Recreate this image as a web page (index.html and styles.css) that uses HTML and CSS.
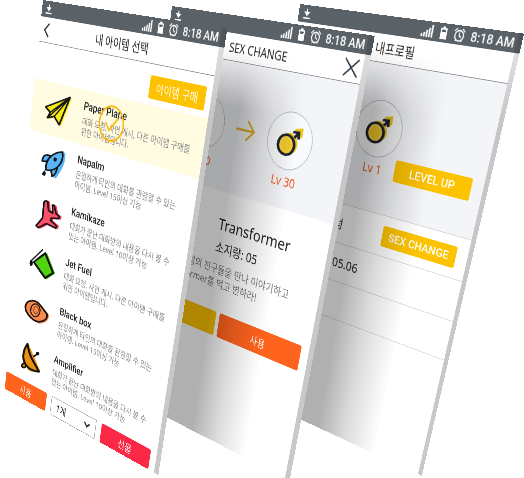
FILE: index.html
```html
<!DOCTYPE html>
<html lang="ko">
<head>
<meta charset="utf-8">
<title>아이템</title>
<link rel="stylesheet" href="styles.css">
</head>
<body>
<svg width="0" height="0" class="defs" aria-hidden="true">
  <symbol id="download" viewBox="0 0 16 16"><path d="M8 1v7M4.500 6L8 10l3.500-4z" fill="#fff" stroke="#fff" stroke-width="2"/><path d="M1 14h14" stroke="#fff" stroke-width="2"/></symbol>
  <symbol id="signal" viewBox="0 0 20 16"><path d="M2 16v-4M6 16v-6M10 16V7M14 16V4M18 16V0" stroke="#fff" stroke-width="2.600"/></symbol>
  <symbol id="battery" viewBox="0 0 10 16"><path d="M3 0h4v2h3v14H0V2h3z" fill="#fff"/><path d="M2 4h6v3H2z" fill="#5a6167"/></symbol>
  <symbol id="alarm" viewBox="0 0 18 18"><circle cx="9" cy="10" r="6.500" fill="none" stroke="#fff" stroke-width="1.800"/><path d="M9 6v4l3 2M1 5l4-4M17 5l-4-4M4 17l1.500-2M14 17l-1.500-2" fill="none" stroke="#fff" stroke-width="1.700"/></symbol>
  <symbol id="male" viewBox="0 0 80 80">
    <g transform="translate(40 40) matrix(.58 -.11 .1 .44 0 0)">
      <ellipse cx="-3" cy="8" rx="27" ry="34" fill="#efc419"/>
      <path d="M18-37L43-38 39-12 30-4 22-18z" fill="#efc419"/>
      <ellipse cx="-11" cy="11" rx="25" ry="31" fill="#f2c92c" stroke="#1c2130" stroke-width="8"/>
      <ellipse cx="-11" cy="11" rx="18" ry="24" fill="none" stroke="#f8dc60" stroke-width="2"/>
      <path d="M12-28l17 3-2 20M27-23L15-10" fill="none" stroke="#1c2130" stroke-width="8"/>
    </g>
  </symbol>
</svg>
<main class="scene">

  <section class="phone profile">
    <div class="status"><svg class="i-dl"><use href="#download"/></svg><svg class="i-sig"><use href="#signal"/></svg><svg class="i-bat"><use href="#battery"/></svg><svg class="i-alarm"><use href="#alarm"/></svg><span>8:18 AM</span></div>
    <header class="bar"><h2>내프로필</h2></header>
    <div class="hero">
      <div class="level"><div class="avatar"><svg><use href="#male"/></svg></div><p>Lv 1</p></div>
      <button class="gold raised">LEVEL UP</button>
    </div>
    <div class="row"><span>현재 성별</span><span>남성</span><button class="gold">SEX CHANGE</button></div>
    <div class="row"><span>가입일</span><span>1989.05.06</span></div>
    <div class="row"></div>
    <div class="shade"></div>
  </section>

  <section class="phone change">
    <div class="status"><svg class="i-dl"><use href="#download"/></svg><svg class="i-sig"><use href="#signal"/></svg><svg class="i-bat"><use href="#battery"/></svg><svg class="i-alarm"><use href="#alarm"/></svg><span>8:18 AM</span></div>
    <header class="bar"><h2>SEX CHANGE</h2>
      <button class="icon-btn close" aria-label="닫기"><svg viewBox="0 0 24 24"><path d="M1 1l22 22M23 1L1 23" fill="none" stroke="#273241" stroke-width="2"/></svg></button>
    </header>
    <div class="hero">
      <div class="level"><div class="avatar"></div><p>Lv 10</p></div>
      <svg class="arrow" viewBox="0 0 36 32"><path d="M0 16h34M20 2l14 14-14 14" fill="none" stroke="#e0ab1c" stroke-width="3"/></svg>
      <div class="level"><div class="avatar"><svg><use href="#male"/></svg></div><p>Lv 30</p></div>
    </div>
    <div class="about">
      <h3>Transformer</h3>
      <p class="count">소지량: 05</p>
      <p class="text">지금 이성의 친구들을 만나 이야기하고<br>Transformer를 먹고 변하라!</p>
    </div>
    <div class="pair"><button class="gold">구매</button><button class="orange">사용</button></div>
    <div class="shade"></div>
  </section>

  <section class="phone items">
    <div class="status"><svg class="i-dl"><use href="#download"/></svg><svg class="i-sig"><use href="#signal"/></svg><svg class="i-bat"><use href="#battery"/></svg><svg class="i-alarm"><use href="#alarm"/></svg><span>8:18 AM</span></div>
    <header class="bar">
      <button class="icon-btn back" aria-label="뒤로"><svg viewBox="0 0 14 24"><path d="M12 2L2 12l10 10" fill="none" stroke="#273241" stroke-width="2.500"/></svg></button>
      <h2>내 아이템 선택</h2>
    </header>
    <div class="buy"><button class="gold">아이템 구매</button></div>
    <ul class="list">
      <li class="selected">
        <svg viewBox="0 0 60 60"><g transform="translate(30 30) matrix(.76 -.13 .08 .5 0 0)" stroke-linejoin="round"><path d="M38-38L-36-10-22 6-32 22-10 18 6 44z" fill="#f7ea12"/><path d="M33-41L-40-14-26 3-35 19-14 15 1 40z" fill="#f7ea12" stroke="#151515" stroke-width="5"/><path d="M33-41L-26 3M33-41L-35 19M33-41L-14 15" fill="none" stroke="#151515" stroke-width="4"/></g></svg>
        <div><h3>Paper Plane</h3><p>대화 요청, 사연 게시, 다른 아이템 구매를<br>위한 아이템입니다.</p></div>
        <svg class="check" viewBox="0 0 54 54"><circle cx="27" cy="27" r="25" fill="none" stroke="#fbb919" stroke-width="3"/><path d="M15 27l9 10 16-20" fill="none" stroke="#fbb919" stroke-width="3"/></svg>
      </li>
      <li>
        <svg viewBox="0 0 60 60"><g transform="translate(30 30) matrix(.77 -.16 .08 .51 0 0)" stroke-linejoin="round"><path d="M34-30C36 6 16 28 8 42L0 38 2 20-14 20z" fill="#58b5f5" stroke="#58b5f5" stroke-width="4"/><path d="M-20-6l-13-2q2-18 14-18l12 3z" fill="#58b5f5" stroke="#10141c" stroke-width="5"/><path d="M-6 20l3 18q12-4 15-26z" fill="#58b5f5" stroke="#10141c" stroke-width="5"/><path d="M28-34C4-36-24-16-22 19 6 26 32 2 28-34z" fill="#58b5f5" stroke="#10141c" stroke-width="5"/><ellipse cx="6" cy="-12" rx="5" ry="6" fill="#10141c"/><path d="M-26 20l-9 12 9 6 5-8z" fill="#10141c"/></g></svg>
        <div><h3>Napalm</h3><p>은밀하게 타인의 대화를 관람할 수 있는<br>아이템. Level 15이상 가능</p></div>
      </li>
      <li>
        <svg viewBox="0 0 60 60"><g transform="translate(30 30) matrix(.77 -.16 .08 .51 0 0)" stroke-linejoin="round"><path d="M-11-36q6-9 12-1L3-12 16-4 15-29 20-28 26-3 36 5 34 11 12 11 9 18 28 34 25 41-3 29-28 43-35 37-15 12z" transform="translate(5 1)" fill="#fb3f5c" stroke="#fb3f5c" stroke-width="4"/><path d="M-11-36q6-9 12-1L3-12 16-4 15-29 20-28 26-3 36 5 34 11 12 11 9 18 28 34 25 41-3 29-28 43-35 37-15 12z" fill="#fb5068" stroke="#151216" stroke-width="5"/></g></svg>
        <div><h3>Kamikaze</h3><p>대화가 끝난 대화방의 내용을 다시 볼 수<br>있는 아이템. Level 10이상 가능</p></div>
      </li>
      <li>
        <svg viewBox="0 0 60 60"><g transform="translate(30 30) matrix(.79 -.2 .09 .53 0 0)"><path d="M-20-4L16-31 39 28 13 48z" fill="#4fd40e"/><path d="M-25-4L10-31 33 27 9 43z" fill="#4fd40e" stroke="#111" stroke-width="6" stroke-linejoin="round"/><path d="M-36-4L3-42" stroke="#111" stroke-width="4"/><path d="M-30-4L7-38" stroke="#fff" stroke-width="3"/><ellipse cx="-33" cy="0" rx="5" ry="9" fill="#111"/></g></svg>
        <div><h3>Jet Fuel</h3><p>대화 요청, 사연 게시, 다른 아이템 구매를<br>위한 아이템입니다.</p></div>
      </li>
      <li>
        <svg viewBox="0 0 60 60"><g transform="translate(30 30) matrix(.81 -.24 .09 .55 0 0)"><path d="M-22-22Q-2-36 16-16L36 10Q36 33 10 36-14 32-30 4-36-12-22-22z" fill="#f88a4c"/><path d="M-26-28Q-4-38 12-17L31 8Q32 28 6 31-16 28-32 0-38-18-26-28z" fill="#f88a4c" stroke="#15110e" stroke-width="5"/><ellipse cx="-4" cy="-3" rx="14" ry="19" fill="none" stroke="#15110e" stroke-width="3"/><ellipse cx="-2" cy="-4" rx="7" ry="11" fill="none" stroke="#6b3a20" stroke-width="2"/></g></svg>
        <div><h3>Black box</h3><p>은밀하게 타인의 대화를 관람할 수 있는<br>아이템. Level 15이상 가능</p></div>
      </li>
      <li>
        <svg viewBox="0 0 60 60"><g transform="translate(30 30) matrix(.82 -.29 .09 .56 0 0)" stroke-linejoin="round"><path d="M-8-40L26 40Q0 46-12 34z" fill="#e8920e"/><path d="M-12-42C-34-12-30 36 22 41 8 12-6 0-12-42z" fill="#e8920e" stroke="#17120c" stroke-width="6"/><path d="M5-3l13-9" stroke="#17120c" stroke-width="5"/><circle cx="18" cy="-13" r="5" fill="#17120c"/><circle cx="-23" cy="23" r="6" fill="#e8920e" stroke="#17120c" stroke-width="5"/></g></svg>
        <div><h3>Amplifier</h3><p>대화가 끝난 대화방의 내용을 다시 볼 수<br>있는 아이템. Level 10이상 가능</p></div>
      </li>
    </ul>
    <footer class="actions">
      <button class="orange">사용</button>
      <div class="pick"><select aria-label="개수"><option>1개</option></select><svg viewBox="0 0 16 12"><path d="M2 3l6 6 6-6" fill="none" stroke="#273241" stroke-width="3"/></svg></div>
      <button class="red">선물</button>
    </footer>
  </section>
</main>
</body>
</html>
```
FILE: styles.css
```css
* { box-sizing: border-box; }
body { margin: 0; background: #fff; font-family: "Noto Sans", "Noto Sans CJK KR", sans-serif; color: #222; }
h2, h3, p, ul { margin: 0; padding: 0; font-weight: 400; }
ul { list-style: none; }
button, select { font: inherit; margin: 0; padding: 0; border: 0; }
.defs { position: absolute; }

.scene { position: relative; height: 100vh; overflow: hidden; }

/* each phone is a flat 360-wide screen, tilted in space */
.phone {
  position: absolute; top: 0; left: 0;
  width: 360px; min-height: 640px;
  display: flex; flex-direction: column;
  background: #fff;
  transform-origin: 0 0;
}
.items { transform: matrix3d(.404194, .066044, 0, -.00041908, -.06195, .675734, 0, .00018358, 0, 0, 1, 0, 43, 0, 0, 1); }
.change { transform: matrix3d(.395472, .066161, 0, -.00041128, -.043453, .704359, 0, .00023988, 0, 0, 1, 0, 172, 6, 0, 1); }
.profile { transform: matrix3d(.393083, .066861, 0, -.00041475, -.013047, .723625, 0, .00028997, 0, 0, 1, 0, 300, 4, 0, 1); }

/* side face of the slab */
.phone::after {
  content: ""; position: absolute; top: 0; bottom: 0; left: 100%; width: 9px;
  background: linear-gradient(#4f565b 24px, #dedede 24px, #c6c6c6 110px, #c9c9c9);
}
.profile::after { width: 7px; }

.status {
  height: 24px; padding: 0 3px 0 8px; display: flex; align-items: center;
  background: #5a6167; color: #fff; font: 500 17px/24px Roboto, sans-serif;
}
.i-dl { width: 16px; height: 16px; margin-right: auto; }
.i-sig { width: 20px; height: 16px; margin-right: 11px; }
.i-bat { width: 10px; height: 16px; margin-right: 10px; }
.i-alarm { width: 18px; height: 18px; margin-right: 8px; }

.bar { position: relative; height: 38px; display: flex; align-items: center; justify-content: center; border-bottom: 1px solid #8b8f93; }
.bar h2 { font-size: 18px; line-height: 24px; }
.icon-btn { position: absolute; background: none; display: flex; }
.back { left: 9px; }
.back svg { width: 14px; height: 24px; }
.close { right: 6px; }
.close svg { width: 24px; height: 24px; }

.gold, .orange, .red { border-radius: 3px; color: #fff; font-size: 16px; }
.gold { background: #fdc300; }
.orange { background: #ff641e; }
.red { background: #fb2846; }

.buy { padding: 15px 10px 9px; display: flex; justify-content: flex-end; }
.buy .gold { width: 104px; height: 32px; }
.list li { position: relative; height: 81px; padding: 0 16px 0 34px; display: flex; align-items: center; gap: 24px; }
.list li > svg { width: 60px; height: 60px; overflow: visible; flex: none; }
.list h3 { font: 500 17px/20px Roboto, sans-serif; color: #222; }
.list p { font-size: 13px; line-height: 16px; color: #888; white-space: nowrap; margin-top: 4px; }
.list .selected { background: #fffce2; }
.list li > .check { position: absolute; left: 153px; top: 12px; width: 54px; height: 54px; }

.actions { margin-top: 5px; padding: 0 12px 0 5px; display: grid; grid-template-columns: repeat(3, 1fr); gap: 12px; }
.actions button, .pick { height: 32px; }
.pick { position: relative; }
.pick select { appearance: none; width: 100%; height: 100%; padding: 0 12px; border: 1px solid #999; background: #fff; color: #222; font-size: 16px; }
.pick svg { position: absolute; right: 12px; top: 10px; width: 16px; height: 12px; }

.hero { height: 186px; background: #f4f5f8; display: flex; justify-content: center; gap: 24px; padding-top: 51px; }
.profile .hero { position: relative; height: 208px; border-bottom: 1px solid #d2d2d4; padding: 49px 6px 0 0; }
.level p { margin-top: 4px; color: #f1561d; font-size: 18px; line-height: 24px; text-align: center; }
.avatar { width: 80px; height: 80px; border: 1px solid #a9adb5; border-radius: 50%; background: #f9fafb; }
.avatar svg { width: 78px; height: 78px; display: block; }
.arrow { width: 36px; height: 32px; margin-top: 24px; }
.profile .gold { width: 126px; height: 31px; font: 500 17px/31px Roboto, sans-serif; }
.raised { position: absolute; right: 18px; bottom: 50px; }
.row { height: 60px; padding: 0 18px; display: flex; align-items: center; gap: 16px; border-bottom: 1px solid #d2d2d4; font-size: 19px; }
.row .gold { margin-left: auto; }

.about { padding: 30px 0 0 155px; }
.about h3 { font-size: 24px; line-height: 36px; }
.about .count { font-size: 19px; line-height: 36px; }
.about .text { margin: 4px 0 0 -100px; font-size: 16px; line-height: 22px; color: #777; white-space: nowrap; }
.pair { margin-top: 33px; padding: 0 14px; display: grid; grid-template-columns: 1fr 1fr; gap: 7px; }
.pair button { height: 39px; }

/* shadow that the phone in front casts on this one */
.shade {
  position: absolute; top: 44px; bottom: 0; left: 0; right: 0; pointer-events: none;
  background: linear-gradient(90deg, rgba(0,0,0,.31) 45%, rgba(0,0,0,.14) 60%, transparent 77%);
  mask-image: linear-gradient(transparent, #000 80px);
}
```
